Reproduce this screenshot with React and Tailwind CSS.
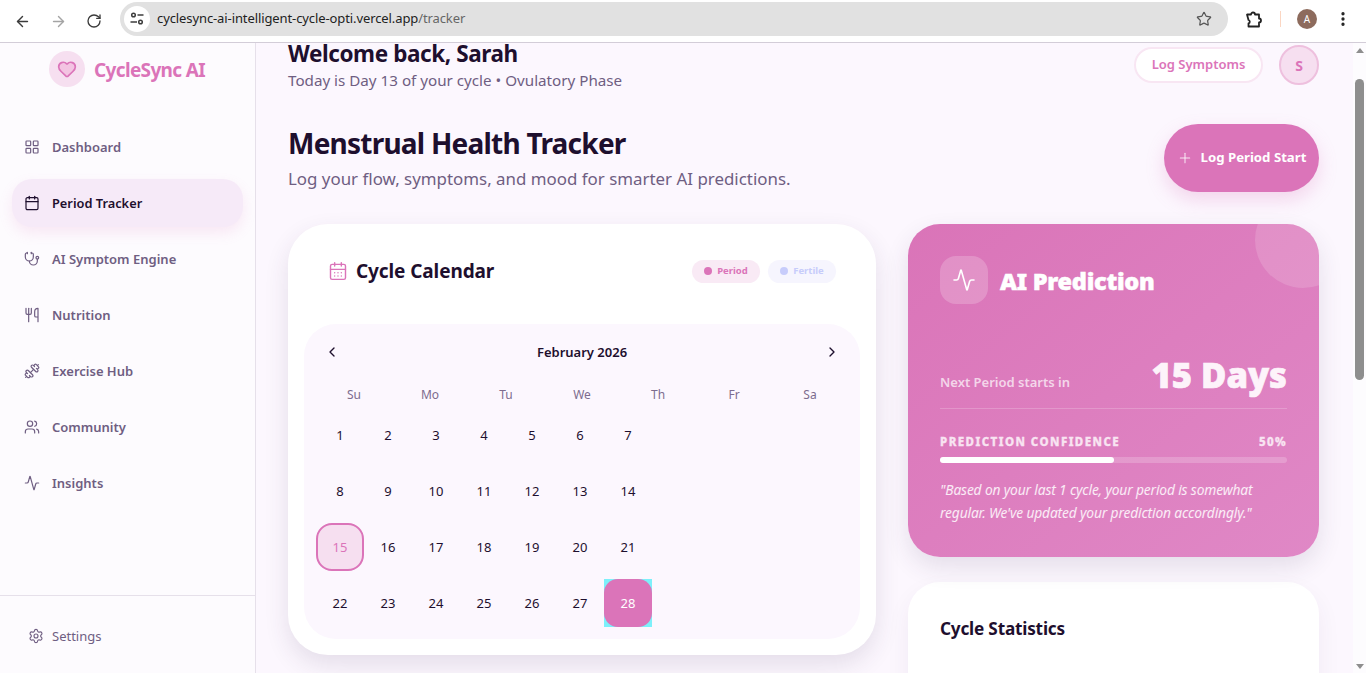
import React from 'react';
import { ArrowLeft, ArrowRight, RotateCw, Star, EllipsisVertical, LayoutGrid, Calendar, Stethoscope, Utensils, Dumbbell, Users, Activity, Settings, Heart, CalendarDays, ChevronLeft, ChevronRight, Plus } from 'lucide-react';

const nav = [
  ['Dashboard', LayoutGrid],
  ['Period Tracker', Calendar, true],
  ['AI Symptom Engine', Stethoscope],
  ['Nutrition', Utensils],
  ['Exercise Hub', Dumbbell],
  ['Community', Users],
  ['Insights', Activity],
];
const weekdays = ['Su', 'Mo', 'Tu', 'We', 'Th', 'Fr', 'Sa'];
const weeks = [[1,2,3,4,5,6,7],[8,9,10,11,12,13,14],[15,16,17,18,19,20,21],[22,23,24,25,26,27,28]];

function Toolbar() {
  return (
    <div className="relative z-10 h-[43px] shrink-0 bg-white border-b border-[#d3cdd8] flex items-center pl-[14px] pr-[13px]">
      <ArrowLeft size={17} className="text-[#3b3b3b]" strokeWidth={2} />
      <ArrowRight size={17} className="text-[#a4a4a4] ml-[19px]" strokeWidth={2} />
      <RotateCw size={16} className="text-[#3b3b3b] ml-[19px]" strokeWidth={2} />
      <div className="ml-[18px] w-[1108px] h-[34px] -mt-[4px] rounded-full bg-[#e1e1e1] flex items-center pl-[4px] pr-[16px]">
        <div className="w-[26px] h-[26px] rounded-full bg-white flex items-center justify-center">
          <svg width="16" height="16" viewBox="0 0 16 16" fill="none" stroke="#3c3c3c" strokeWidth="1.5">
            <circle cx="4.5" cy="4" r="1.8" /><path d="M8.5 4h6" /><circle cx="11.5" cy="11" r="1.8" /><path d="M1.5 11h6.5" />
          </svg>
        </div>
        <span className="ml-[7px] text-[13px] text-[#222] tracking-[-0.1px]">cyclesync-ai-intelligent-cycle-opti.vercel.app<span className="text-[#666]">/tracker</span></span>
        <Star size={16} className="ml-auto text-[#555]" strokeWidth={1.8} />
      </div>
      <svg width="18" height="18" viewBox="0 0 18 18" fill="none" stroke="#222" strokeWidth="1.8" strokeLinejoin="round" className="ml-[17px] -mt-[4px]">
        <path d="M2 4.5h4a2 2 0 0 1 4 0h4v4a2 2 0 0 1 0 4v4H3.5v-3.2a1.7 1.7 0 0 0 0-3.3Z" />
      </svg>
      <div className="ml-[17px] w-[1px] h-[16px] -mt-[4px] bg-[#fbd6c2]" />
      <div className="ml-[16px] w-[20px] h-[20px] -mt-[4px] rounded-full bg-[#8d6b5d] text-white text-[10px] flex items-center justify-center">A</div>
      <EllipsisVertical size={18} className="ml-[17px] -mt-[4px] text-[#222]" strokeWidth={2.4} />
    </div>
  );
}

function Sidebar() {
  return (
    <aside className="w-[256px] shrink-0 border-r border-[#e6e0ea] bg-[#fdfbfe] flex flex-col">
      <div className="flex items-center pl-[49px] h-[52px]">
        <div className="w-[36px] h-[36px] rounded-full bg-[#f6dff0] flex items-center justify-center">
          <Heart size={20} className="text-[#db74b9]" fill="#f3c4e2" strokeWidth={2} />
        </div>
        <span className="ml-[9px] pt-[2px] text-[19px] font-bold text-[#db74b9] tracking-[-0.65px]">CycleSync AI</span>
      </div>
      <nav className="mt-[28px] px-[12px] flex flex-col gap-[8px]">
        {nav.map(([label, Icon, active]) => (
          <div key={label} className={`h-[48px] rounded-[20px] pl-[12px] flex items-center gap-[12px] font-semibold ${active ? 'text-[12.8px] bg-[#f6eaf8] text-[#1e0f2e] shadow-[0_6px_14px_rgba(219,116,185,0.14)]' : 'text-[13px] text-[#6f5e82]'}`}>
            <Icon size={16} strokeWidth={1.8} />
            <span className="pt-[2px]">{label}</span>
          </div>
        ))}
      </nav>
      <div className="mt-auto h-[78px] border-t border-[#e6e0ea] pt-[2px] pl-[28px] flex items-center gap-[8px] text-[13px] text-[#6f5e82]">
        <Settings size={16} strokeWidth={1.7} />
        <span className="pt-[2px]">Settings</span>
      </div>
    </aside>
  );
}

function CalendarCard() {
  return (
    <section className="w-[588px] h-[431px] shrink-0 rounded-[40px] bg-white p-[16px] shadow-[0_10px_24px_rgba(60,40,80,0.12)]">
      <div className="h-[64px] flex items-center pl-[24px] pr-[24px] -mt-[1px]">
        <CalendarDays size={20} className="text-[#db74b9]" strokeWidth={1.7} />
        <h2 className="ml-[8px] text-[19px] font-bold text-[#1e0f2e] tracking-[-0.1px]">Cycle Calendar</h2>
        <div className="ml-auto flex gap-[8px]">
          <span className="h-[23px] w-[68px] rounded-full bg-[#f9eaf5] flex items-center justify-center gap-[5px] text-[9.5px] font-bold text-[#db74b9]">
            <i className="w-[8px] h-[8px] rounded-full bg-[#db74b9]" />Period
          </span>
          <span className="h-[23px] w-[68px] rounded-full bg-[#f6f5fe] flex items-center justify-center gap-[5px] text-[9.5px] font-bold text-[#c7ccfb]">
            <i className="w-[8px] h-[8px] rounded-full bg-[#c7ccfb]" />Fertile
          </span>
        </div>
      </div>
      <div className="mt-[21px] h-[315px] rounded-[32px] bg-[#fcf7fe] p-[12px]">
        <div className="h-[32px] flex items-center justify-between px-[8px]">
          <ChevronLeft size={16} className="text-[#1e0f2e]" strokeWidth={2} />
          <span className="pt-[2px] text-[13px] font-semibold text-[#1e0f2e]">February 2026</span>
          <ChevronRight size={16} className="text-[#1e0f2e]" strokeWidth={2} />
        </div>
        <div className="mt-[10px] grid grid-cols-7 text-center text-[12px] text-[#7d6c8e]">
          {weekdays.map((d) => <div key={d} className="h-[32px] pt-[2px] flex items-center justify-center">{d}</div>)}
        </div>
        <div className="mt-[1px] flex flex-col gap-[8px]">
          {weeks.map((w) => (
            <div key={w[0]} className="flex">
              {w.map((n) => {
                if (n === 15) return <div key={n} className="w-[48px] h-[48px] pt-[2px] rounded-[16px] border-2 border-[#db74b9] bg-[#f6dff0] text-[#db74b9] text-[13px] flex items-center justify-center">15</div>;
                if (n === 28) return <div key={n} className="w-[48px] h-[48px] bg-[#7df0fa]"><div className="w-full h-full pt-[2px] rounded-[14px] bg-[#db74b9] text-white text-[13px] flex items-center justify-center">28</div></div>;
                return <div key={n} className="w-[48px] h-[48px] pt-[2px] text-[13px] text-[#1e0f2e] flex items-center justify-center">{n}</div>;
              })}
            </div>
          ))}
        </div>
      </div>
    </section>
  );
}

function Prediction() {
  return (
    <section className="relative overflow-hidden h-[333px] rounded-[32px] bg-gradient-to-br from-[#da74b8] to-[#e088c6] p-[32px] text-white shadow-[0_10px_24px_rgba(60,40,80,0.12)]">
      <div className="absolute -top-[32px] -right-[32px] w-[96px] h-[96px] rounded-full bg-white/15" />
      <div className="flex items-center gap-[12px]">
        <div className="w-[48px] h-[48px] rounded-[16px] bg-white/20 flex items-center justify-center">
          <Activity size={24} strokeWidth={1.6} />
        </div>
        <h2 className="pt-[4px] text-[23.5px] font-black tracking-[-0.27px] [-webkit-text-stroke:0.5px_white]">AI Prediction</h2>
      </div>
      <div className="mt-[41px] h-[64px] border-b border-white/20 flex items-start justify-between">
        <span className="mt-[28px] text-[13px] font-semibold text-white/70">Next Period starts in</span>
        <span className="text-[34.6px] leading-[40px] mt-[10px] font-black text-[#fdf3fa] [-webkit-text-stroke:0.7px_#fdf3fa]">15 Days</span>
      </div>
      <div className="mt-[24px] flex justify-between text-[11.5px] leading-[18px] font-extrabold tracking-[1.45px] text-white/80 [-webkit-text-stroke:0.3px_#f8e0f0]">
        <span>PREDICTION CONFIDENCE</span><span className="tracking-[1.4px]">50%</span>
      </div>
      <div className="mt-[6px] h-[6px] rounded-full bg-white/20">
        <div className="w-1/2 h-full rounded-full bg-white" />
      </div>
      <p className="mt-[15px] text-[13.8px] leading-[23px] italic text-white/85 tracking-[-0.15px]">"Based on your last 1 cycle, your period is somewhat regular. We've updated your prediction accordingly."</p>
    </section>
  );
}

function Scrollbar() {
  return (
    <div className="w-[13px] shrink-0 bg-[#fdfcfe] flex flex-col items-center">
      <div className="mt-[5px] w-0 h-0 border-l-[4px] border-r-[4px] border-b-[5px] border-l-transparent border-r-transparent border-b-[#8e8e8e]" />
      <div className="mt-[26px] w-[9px] h-[301px] rounded-full bg-[#8e8e8e]" />
      <div className="mt-auto mb-[4px] w-0 h-0 border-l-[4px] border-r-[4px] border-t-[5px] border-l-transparent border-r-transparent border-t-[#8e8e8e]" />
    </div>
  );
}

export default function App() {
  return (
    <div className="h-[673px] w-full overflow-hidden flex flex-col bg-[#fcf7fe] font-['Noto_Sans',sans-serif]">
      <Toolbar />
      <div className="flex-1 min-h-0 flex">
        <Sidebar />
        <main className="flex-1 min-w-0 pl-[32px] pr-[34px]">
          <header className="h-[63px] flex items-start justify-between">
            <div>
              <h1 className="text-[22.5px] leading-[22px] font-bold text-[#1e0f2e] tracking-[-0.4px]">Welcome back, Sarah</h1>
              <p className="mt-[3px] text-[15.2px] leading-[24px] text-[#6f5e82]">Today is Day 13 of your cycle • Ovulatory Phase</p>
            </div>
            <div className="flex items-center gap-[16px] mt-[2px]">
              <button className="h-[36px] w-[129px] rounded-full bg-white border-2 border-[#f8e6f3] text-[#db74b9] text-[13px] font-semibold">Log Symptoms</button>
              <div className="w-[40px] h-[40px] rounded-full bg-[#f6dff0] border-2 border-[#eec0de] text-[#db74b9] font-bold text-[14px] flex items-center justify-center">S</div>
            </div>
          </header>
          <div className="mt-[18px] h-[68px] flex items-start justify-between">
            <div>
              <h1 className="mt-[1px] text-[28px] leading-[36px] font-bold text-[#1e0f2e] tracking-[-0.77px]">Menstrual Health Tracker</h1>
              <p className="mt-[6px] text-[16.9px] leading-[24px] text-[#6f5e82]">Log your flow, symptoms, and mood for smarter AI predictions.</p>
            </div>
            <button className="h-[68px] w-[155px] rounded-[34px] bg-[#db74b9] text-white text-[13.2px] font-bold flex items-center justify-center gap-[8px] shadow-[0_8px_18px_rgba(219,116,185,0.25)]">
              <Plus size={16} strokeWidth={1.6} className="text-white/80" />Log Period Start
            </button>
          </div>
          <div className="mt-[32px] flex gap-[32px] items-start">
            <CalendarCard />
            <div className="flex-1 min-w-0 flex flex-col gap-[25px]">
              <Prediction />
              <section className="h-[200px] rounded-[32px] bg-white px-[32px] pt-[34px] shadow-[0_10px_24px_rgba(60,40,80,0.06)]">
                <h2 className="text-[17.2px] leading-[26px] font-bold text-[#1e0f2e] tracking-[-0.2px]">Cycle Statistics</h2>
              </section>
            </div>
          </div>
        </main>
        <Scrollbar />
      </div>
    </div>
  );
}
